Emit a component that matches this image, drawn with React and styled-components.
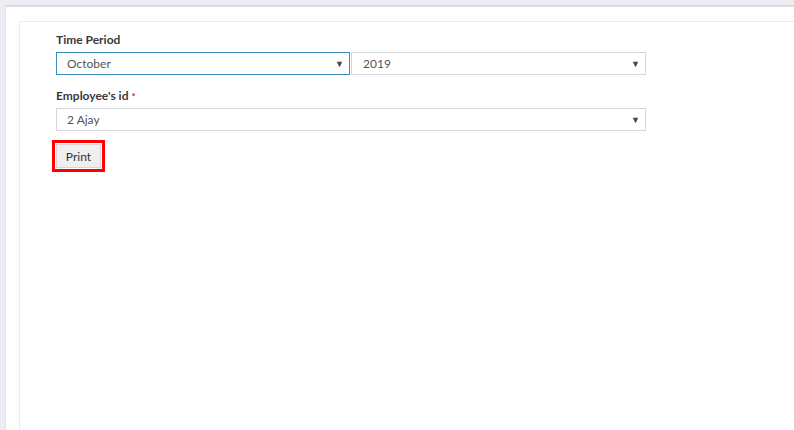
import React from 'react';
import styled, { createGlobalStyle } from 'styled-components';

const GlobalStyle = createGlobalStyle`
  html, body {
    margin: 0;
    padding: 0;
    background: #ecedf2;
    font-family: Lato, "Open Sans", sans-serif;
    overflow: hidden;
  }
`;

const Page = styled.div`
  height: 430px;
  padding: 5px 0 0 5px;
  box-sizing: border-box;
`;

const Outer = styled.div`
  height: 100%;
  background: #fff;
  border-top: 2px solid #dcdde0;
  border-left: 1px solid #e2e3e6;
  padding: 14px 0 0 13px;
  box-sizing: border-box;
`;

const Inner = styled.div`
  height: 100%;
  border-top: 1px solid #ececec;
  border-left: 1px solid #ececec;
  padding: 10px 0 0 36px;
  box-sizing: border-box;
`;

const Form = styled.div`
  width: 590px;
`;

const Field = styled.div`
  margin-bottom: 13px;
`;

const Label = styled.div`
  font-size: 12px;
  font-weight: 700;
  color: #3a3a3a;
  line-height: 16px;
  margin-bottom: 4px;
`;

const Required = styled.span`
  color: #dd1a1a;
  margin-left: 3px;
  font-size: 10px;
`;

const Row = styled.div`
  display: grid;
  grid-template-columns: ${(p) => p.$cols || '1fr'};
  column-gap: 1px;
`;

const Select = styled.div`
  height: 23px;
  box-sizing: border-box;
  border: 1px solid ${(p) => (p.$focused ? '#3c8dbc' : '#d2d6de')};
  display: flex;
  align-items: center;
  justify-content: space-between;
  padding: 0 5px 0 ${(p) => p.$pad || 10}px;
  font-size: 12px;
  color: #555;
  background: #fff;
`;

const Arrow = styled.span`
  font-size: 9px;
  color: #444;
  line-height: 1;
`;

const Highlight = styled.div`
  display: inline-flex;
  border: 3px solid #ff0000;
  padding: 1px;
  margin-left: -4px;
  margin-top: -4px;
`;

const Button = styled.button`
  display: block;
  width: 45px;
  height: 24px;
  border: 1px solid #d6d6d6;
  background: #efefef;
  color: #333;
  font-family: Lato, "Open Sans", sans-serif;
  font-size: 12px;
  padding: 0;
  cursor: pointer;
`;

const Dropdown = ({ value, focused, pad }) => (
  <Select $focused={focused} $pad={pad}>
    <span>{value}</span>
    <Arrow>▼</Arrow>
  </Select>
);

export default function App() {
  return (
    <>
      <GlobalStyle />
      <Page>
        <Outer>
          <Inner>
            <Form>
              <Field>
                <Label>Time Period</Label>
                <Row $cols="294px 295px">
                  <Dropdown value="October" focused />
                  <Dropdown value="2019" pad={11} />
                </Row>
              </Field>
              <Field>
                <Label>
                  Employee's id<Required>*</Required>
                </Label>
                <Dropdown value="2 Ajay" />
              </Field>
              <Highlight>
                <Button>Print</Button>
              </Highlight>
            </Form>
          </Inner>
        </Outer>
      </Page>
    </>
  );
}
